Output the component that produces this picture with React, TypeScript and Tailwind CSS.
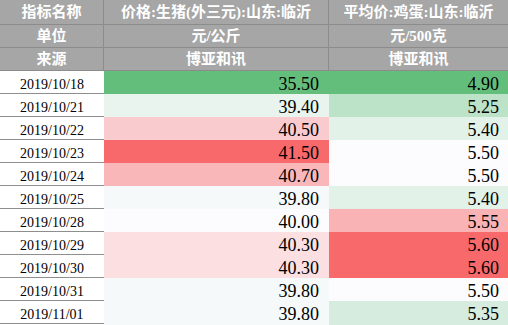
const rows: { date: string; pork: string; porkBg: string; egg: string; eggBg: string }[] = [
  { date: "2019/10/18", pork: "35.50", porkBg: "bg-[#63be7b]", egg: "4.90", eggBg: "bg-[#63be7b]" },
  { date: "2019/10/21", pork: "39.40", porkBg: "bg-[#e8f4ed]", egg: "5.25", eggBg: "bg-[#bce2c8]" },
  { date: "2019/10/22", pork: "40.50", porkBg: "bg-[#facbce]", egg: "5.40", eggBg: "bg-[#e3f2e9]" },
  { date: "2019/10/23", pork: "41.50", porkBg: "bg-[#f8696b]", egg: "5.50", eggBg: "bg-[#fcfcff]" },
  { date: "2019/10/24", pork: "40.70", porkBg: "bg-[#fab7ba]", egg: "5.50", eggBg: "bg-[#fcfcff]" },
  { date: "2019/10/25", pork: "39.80", porkBg: "bg-[#f5f9f9]", egg: "5.40", eggBg: "bg-[#e3f2e9]" },
  { date: "2019/10/28", pork: "40.00", porkBg: "bg-[#fcfcff]", egg: "5.55", eggBg: "bg-[#fab3b5]" },
  { date: "2019/10/29", pork: "40.30", porkBg: "bg-[#fbdfe1]", egg: "5.60", eggBg: "bg-[#f8696b]" },
  { date: "2019/10/30", pork: "40.30", porkBg: "bg-[#fbdfe1]", egg: "5.60", eggBg: "bg-[#f8696b]" },
  { date: "2019/10/31", pork: "39.80", porkBg: "bg-[#f5f9f9]", egg: "5.50", eggBg: "bg-[#fcfcff]" },
  { date: "2019/11/01", pork: "39.80", porkBg: "bg-[#f5f9f9]", egg: "5.35", eggBg: "bg-[#d6ecde]" },
];

const headers = [
  ["指标名称", "价格:生猪(外三元):山东:临沂", "平均价:鸡蛋:山东:临沂"],
  ["单位", "元/公斤", "元/500克"],
  ["来源", "博亚和讯", "博亚和讯"],
];

function App() {
  return (
    <div
      className="w-[508px] h-[325px] overflow-hidden bg-white text-black"
      style={{ fontFamily: '"Liberation Serif", "Noto Sans CJK SC", serif' }}
    >
      {headers.map((cells, i) => (
        <div
          key={i}
          className={`grid grid-cols-[104px_225px_179px] border-b border-[#8c8c8c] bg-[#a6a6a6] text-[15px] font-bold text-white ${
            i === 0 ? "h-[25px]" : "h-[23px]"
          }`}
        >
          <div className="flex items-center justify-center border-r border-[#8c8c8c]">{cells[0]}</div>
          <div className="flex items-center justify-center border-r border-[#8c8c8c] whitespace-nowrap">
            {cells[1]}
          </div>
          <div className="flex items-center justify-center whitespace-nowrap">{cells[2]}</div>
        </div>
      ))}
      {rows.map((row) => (
        <div
          key={row.date}
          className="grid h-[23px] grid-cols-[104px_225px_179px] border-b border-[#8e8e8e]"
        >
          <div className="flex items-center justify-center text-[14px]">{row.date}</div>
          <div className={`flex items-center justify-end pr-[10px] text-[18px] ${row.porkBg}`}>
            {row.pork}
          </div>
          <div className={`flex items-center justify-end pr-[9px] text-[18px] ${row.eggBg}`}>
            {row.egg}
          </div>
        </div>
      ))}
      <div className="ml-[104px] h-[1px] w-px bg-[#d0d0d0]" />
    </div>
  );
}

export default App;
